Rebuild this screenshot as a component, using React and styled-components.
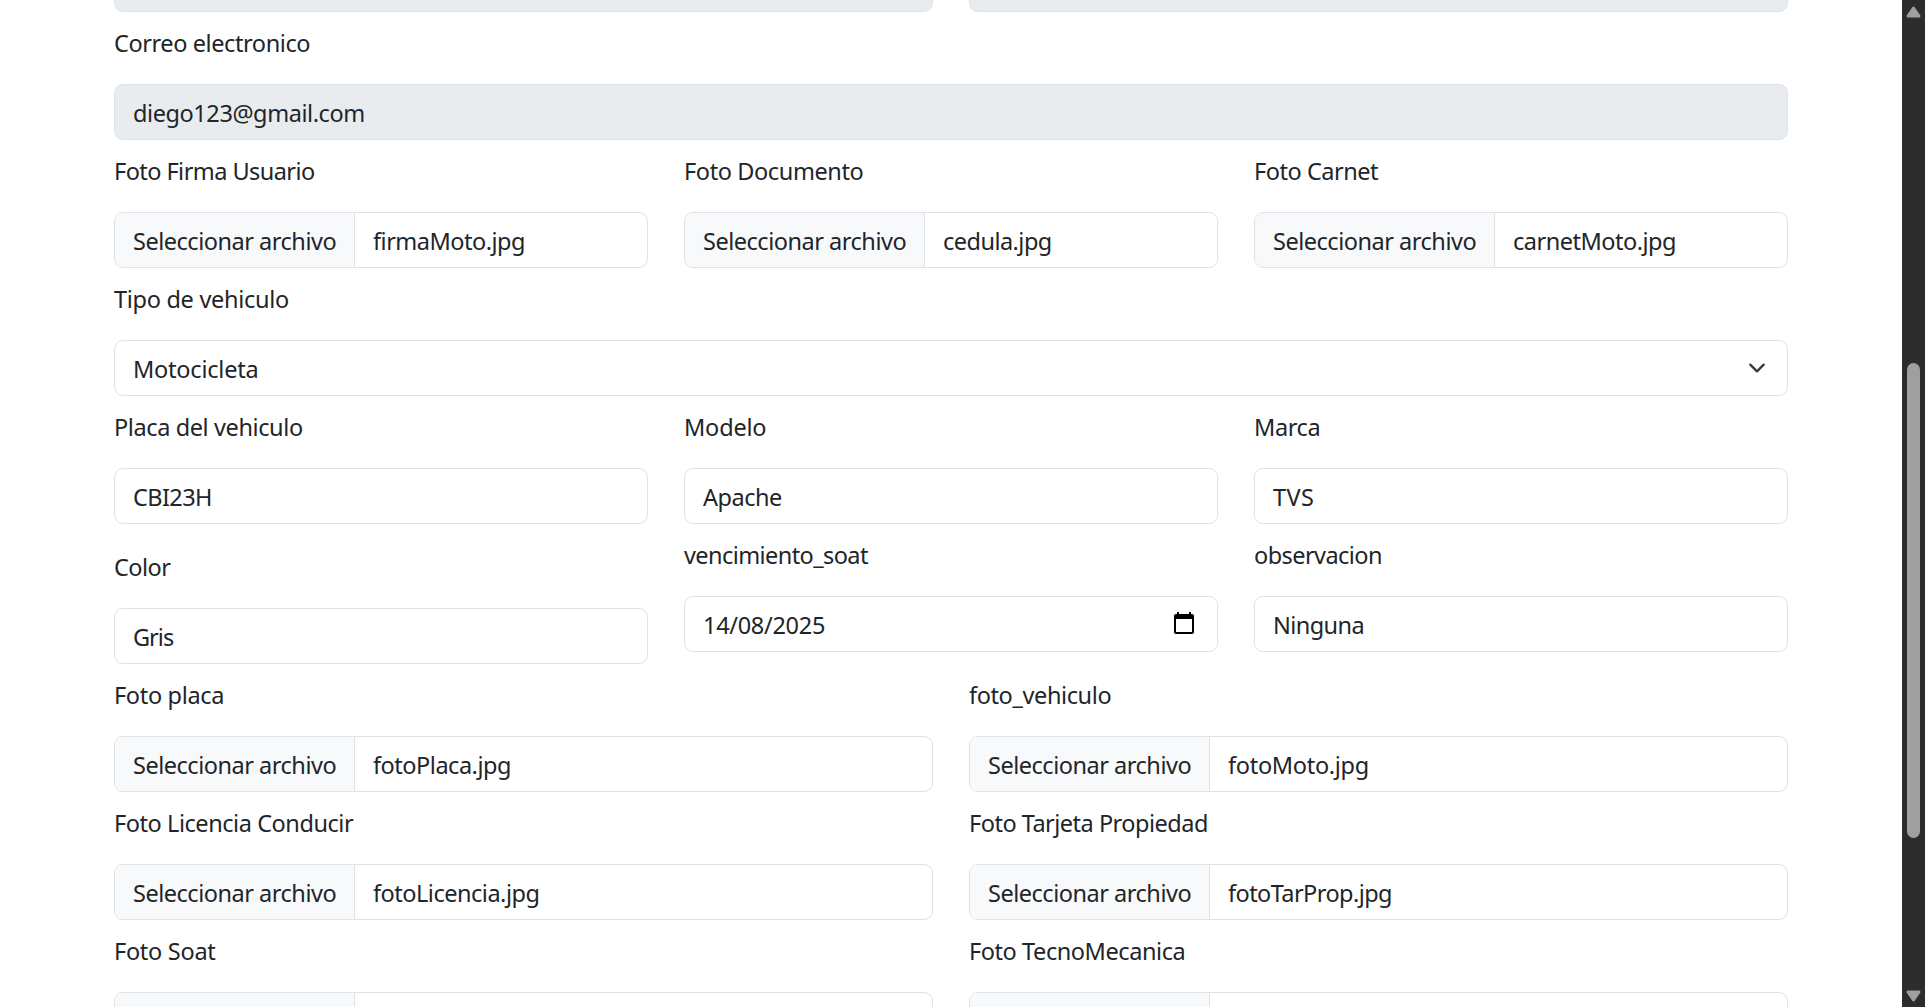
import React from 'react';
import styled, { createGlobalStyle } from 'styled-components';

const GlobalStyle = createGlobalStyle`
  *, *::before, *::after { box-sizing: border-box; }
  body {
    margin: 0;
    background: #fff;
    color: #212529;
    font-family: "Noto Sans", "Open Sans", sans-serif;
    font-size: 23.5px;
    line-height: 36px;
  }
`;

const Window = styled.div`
  display: flex;
  height: 1007px;
  overflow: hidden;
`;

const Page = styled.main`
  flex: 1;
  min-width: 0;
  padding: 0 114px;
  overflow: hidden;
`;

/* The form is scrolled so that its first row is cut by the top edge. */
const Form = styled.div`
  display: flex;
  flex-direction: column;
  margin-top: -44px;
`;

const Row = styled.div`
  display: grid;
  grid-template-columns: repeat(${(p) => p.$columns}, 1fr);
  column-gap: 36px;
  align-items: start;
`;

const Field = styled.div`
  min-width: 0;
  padding-top: ${(p) => (p.$offset ? 12 : 0)}px;
`;

const Label = styled.label`
  display: block;
  padding: 13px 0 23px;
  white-space: nowrap;
`;

const Text = styled.span`
  letter-spacing: ${(p) => p.$tracking || 0}px;
  white-space: nowrap;
`;

const Control = styled.div`
  display: flex;
  justify-content: space-between;
  height: 56px;
  padding: 10px 18px 8px;
  border: 1px solid #dee2e6;
  border-radius: 9px;
  background: ${(p) => (p.$disabled ? '#e9ecef' : '#fff')};
`;

const FileControl = styled.div`
  display: flex;
  height: 56px;
  border: 1px solid #dee2e6;
  border-radius: 9px;
  background: #fff;
  overflow: hidden;
`;

const FileButton = styled.div`
  flex: 0 0 240px;
  padding: 10px 0 8px 18px;
  border-right: 1px solid #dee2e6;
  background: #f8f9fa;
`;

const FileName = styled.div`
  padding: 10px 18px 8px;
`;

const Chevron = styled.svg`
  width: 18px;
  height: 18px;
  margin: 8px 3px 0 0;
`;

const Calendar = styled.svg`
  width: 24px;
  height: 24px;
  margin: 4px 3px 0 0;
`;

const Scrollbar = styled.div`
  display: flex;
  flex-direction: column;
  align-items: center;
  flex: 0 0 23px;
  padding: 6px 0 5px;
  background: #2c2c2c;
`;

const Thumb = styled.div`
  width: 13px;
  height: 475px;
  margin: 345px 0 auto;
  border-radius: 6.5px;
  background: #9f9f9f;
`;

const Arrow = styled.svg`
  width: 15px;
  height: 12px;
  flex: none;
  transform: ${(p) => (p.$down ? 'rotate(180deg)' : 'none')};
`;

const rows = [
  [{ type: 'disabled' }, { type: 'disabled' }],
  [{ label: 'Correo electronico', lt: -0.41, type: 'disabled', value: 'diego123@gmail.com', vt: -0.42 }],
  [
    { label: 'Foto Firma Usuario', lt: -0.55, type: 'file', value: 'firmaMoto.jpg', vt: -0.5 },
    { label: 'Foto Documento', lt: -0.39, type: 'file', value: 'cedula.jpg', vt: -0.53 },
    { label: 'Foto Carnet', lt: -0.47, type: 'file', value: 'carnetMoto.jpg', vt: -0.5 },
  ],
  [{ label: 'Tipo de vehiculo', lt: -0.29, type: 'select', value: 'Motocicleta', vt: -0.22 }],
  [
    { label: 'Placa del vehiculo', lt: -0.39, value: 'CBI23H', vt: -0.6 },
    { label: 'Modelo', lt: -0.2, value: 'Apache', vt: -0.49 },
    { label: 'Marca', lt: -0.38, value: 'TVS', vt: 0.4 },
  ],
  [
    { label: 'Color', lt: -0.54, value: 'Gris', vt: -1, offset: true },
    { label: 'vencimiento_soat', lt: -0.58, type: 'date', value: '14/08/2025', vt: -0.3 },
    { label: 'observacion', lt: -0.56, value: 'Ninguna', vt: -0.57 },
  ],
  [
    { label: 'Foto placa', lt: -0.33, type: 'file', value: 'fotoPlaca.jpg', vt: -0.48 },
    { label: 'foto_vehiculo', lt: -0.39, type: 'file', value: 'fotoMoto.jpg', vt: -0.3 },
  ],
  [
    { label: 'Foto Licencia Conducir', lt: -0.44, type: 'file', value: 'fotoLicencia.jpg', vt: -0.49 },
    { label: 'Foto Tarjeta Propiedad', lt: -0.5, type: 'file', value: 'fotoTarProp.jpg', vt: -0.57 },
  ],
  [
    { label: 'Foto Soat', lt: -0.28, type: 'file' },
    { label: 'Foto TecnoMecanica', lt: -0.43, type: 'file' },
  ],
];

function FormField({ field }) {
  const { label, lt, type, value, vt, offset } = field;
  return (
    <Field $offset={offset}>
      {label && (
        <Label>
          <Text $tracking={lt}>{label}</Text>
        </Label>
      )}
      {type === 'file' ? (
        <FileControl>
          <FileButton>{value && <Text $tracking={-0.48}>Seleccionar archivo</Text>}</FileButton>
          <FileName>{value && <Text $tracking={vt}>{value}</Text>}</FileName>
        </FileControl>
      ) : (
        <Control $disabled={type === 'disabled'}>
          {value && <Text $tracking={vt}>{value}</Text>}
          {type === 'select' && (
            <Chevron viewBox="0 0 16 16" fill="none">
              <path d="m2 5 6 6 6-6" stroke="#343a40" strokeWidth="2" strokeLinecap="round" strokeLinejoin="round" />
            </Chevron>
          )}
          {type === 'date' && (
            <Calendar viewBox="0 0 24 24">
              <path d="M20 3h-1V1h-2v2H7V1H5v2H4c-1.1 0-2 .9-2 2v16c0 1.1.9 2 2 2h16c1.1 0 2-.9 2-2V5c0-1.1-.9-2-2-2zm0 18H4V8h16v13z" />
            </Calendar>
          )}
        </Control>
      )}
    </Field>
  );
}

function ScrollArrow({ down }) {
  return (
    <Arrow $down={down} viewBox="0 0 15 12">
      <path
        d="M7.5 2 13 10H2Z"
        fill="#9f9f9f"
        stroke="#9f9f9f"
        strokeWidth="3"
        strokeLinejoin="round"
      />
    </Arrow>
  );
}

export default function App() {
  return (
    <>
      <GlobalStyle />
      <Window>
        <Page>
          <Form>
            {rows.map((fields, i) => (
              <Row key={i} $columns={fields.length}>
                {fields.map((field, j) => (
                  <FormField key={j} field={field} />
                ))}
              </Row>
            ))}
          </Form>
        </Page>
        <Scrollbar>
          <ScrollArrow />
          <Thumb />
          <ScrollArrow down />
        </Scrollbar>
      </Window>
    </>
  );
}
